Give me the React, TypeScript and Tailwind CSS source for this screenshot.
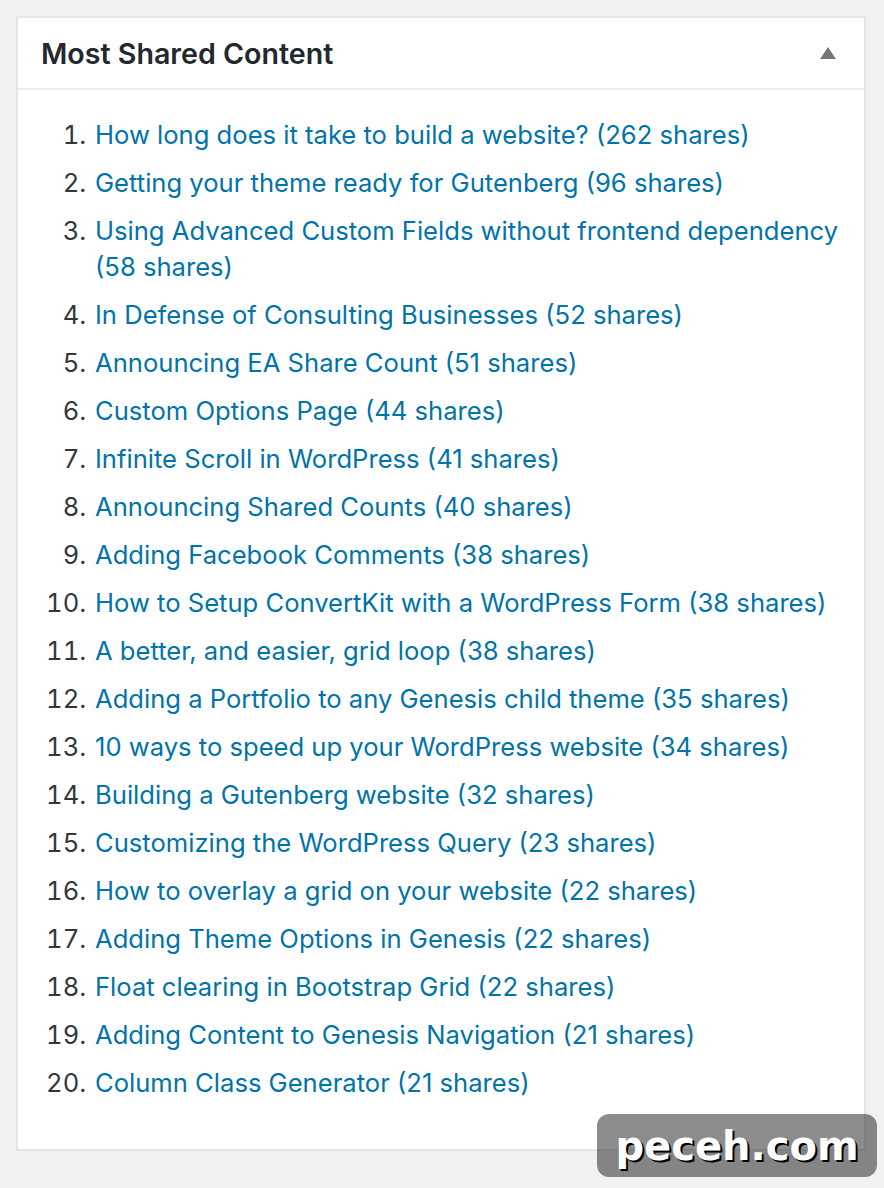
const posts = [
  { title: "How long does it take to build a website?", shares: 262 },
  { title: "Getting your theme ready for Gutenberg", shares: 96 },
  { title: "Using Advanced Custom Fields without frontend dependency", shares: 58 },
  { title: "In Defense of Consulting Businesses", shares: 52 },
  { title: "Announcing EA Share Count", shares: 51 },
  { title: "Custom Options Page", shares: 44 },
  { title: "Infinite Scroll in WordPress", shares: 41 },
  { title: "Announcing Shared Counts", shares: 40 },
  { title: "Adding Facebook Comments", shares: 38 },
  { title: "How to Setup ConvertKit with a WordPress Form", shares: 38 },
  { title: "A better, and easier, grid loop", shares: 38 },
  { title: "Adding a Portfolio to any Genesis child theme", shares: 35 },
  { title: "10 ways to speed up your WordPress website", shares: 34 },
  { title: "Building a Gutenberg website", shares: 32 },
  { title: "Customizing the WordPress Query", shares: 23 },
  { title: "How to overlay a grid on your website", shares: 22 },
  { title: "Adding Theme Options in Genesis", shares: 22 },
  { title: "Float clearing in Bootstrap Grid", shares: 22 },
  { title: "Adding Content to Genesis Navigation", shares: 21 },
  { title: "Column Class Generator", shares: 21 },
];

function App() {
  return (
    <div className="relative min-h-[1188px] w-[884px] bg-[#f1f1f1] pt-[16px] pl-[16px] font-['Inter',sans-serif]">
      <div className="w-[850px] border-2 border-[#e5e5e5] bg-white">
        <div className="flex h-[72px] items-center justify-between border-b-2 border-[#eeeeee] pt-[3px] pl-[23px] pr-[28px]">
          <h2 className="text-[28.6px] font-semibold text-[#23282d]">Most Shared Content</h2>
          <svg width="16" height="12" viewBox="0 0 16 12" className="mb-[4px]">
            <polygon points="8,0 16,12 0,12" fill="#72777c" />
          </svg>
        </div>
        <div className="pt-[27px] pb-[36px] pr-[16px] pl-[75px]">
          <ol className="list-decimal text-[25.6px] leading-[36px] text-[#32373c]">
            {posts.map((p) => (
              <li key={p.title} className="mb-[12px] pl-[2px] marker:text-[#32373c]">
                <a href="#" className="text-[#0073aa]">
                  {p.title} ({p.shares} shares)
                </a>
              </li>
            ))}
          </ol>
        </div>
      </div>
      <div className="absolute left-[597px] top-[1114px] flex h-[63px] w-[280px] items-center justify-center rounded-[12px] bg-[rgba(0,0,0,0.45)]">
        <span className="font-['DejaVu_Sans',sans-serif] text-[40px] font-bold text-white [text-shadow:2px_2px_0_#000]">
          peceh.com
        </span>
      </div>
    </div>
  );
}

export default App;
